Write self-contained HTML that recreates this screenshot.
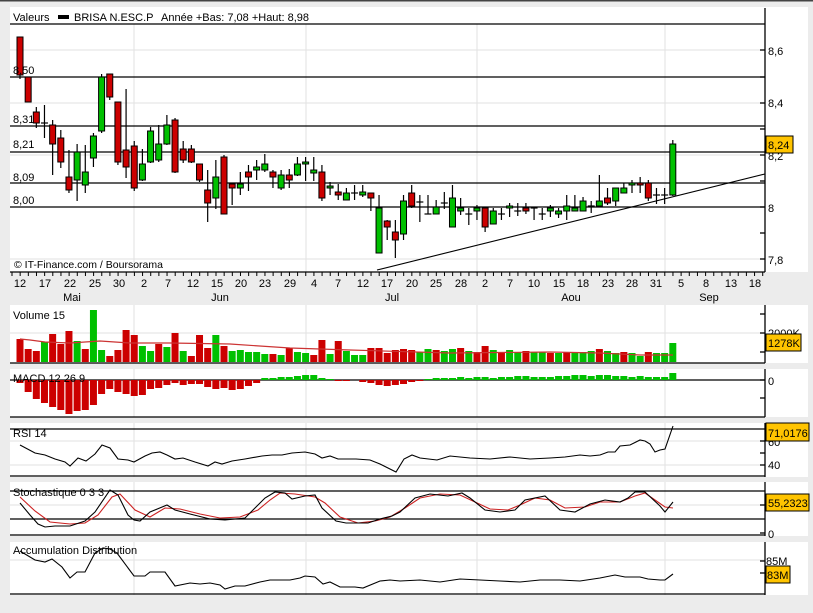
<!DOCTYPE html>
<html><head><meta charset="utf-8"><style>
html,body{margin:0;padding:0;background:#ececec;width:813px;height:613px;overflow:hidden}
svg{display:block;font-family:"Liberation Sans",sans-serif;font-size:11px}
</style></head><body>
<svg id="s" width="813" height="613" xmlns="http://www.w3.org/2000/svg">
<rect x="0" y="0" width="813" height="613" fill="#ececec"/>
<rect x="0" y="0" width="813" height="1.5" fill="#444"/>
<rect x="10" y="7" width="798" height="265" fill="#fff"/>
<rect x="10" y="305" width="798" height="58" fill="#fff"/>
<rect x="10" y="369" width="798" height="48" fill="#fff"/>
<rect x="10" y="423" width="798" height="54" fill="#fff"/>
<rect x="10" y="482" width="798" height="54" fill="#fff"/>
<rect x="10" y="542" width="798" height="53" fill="#fff"/>
<g id="grid" stroke="#e2e2e2" stroke-width="1"></g>
<g id="lines" stroke="#000" stroke-width="1.3"></g>
<g id="draw"></g>
<g fill="#000">
<text x="13" y="21">Valeurs</text>
<rect x="58" y="15" width="11" height="4"/>
<text x="74" y="21">BRISA N.ESC.P</text>
<text x="161" y="21">Année +Bas: 7,08 +Haut: 8,98</text>
<text x="13" y="74">8,50</text><text x="13" y="123">8,31</text><text x="13" y="148">8,21</text><text x="13" y="181">8,09</text><text x="13" y="204">8,00</text>
<text x="14" y="268" font-size="10.5">© IT-Finance.com / Boursorama</text>
<text x="768" y="55">8,6</text><text x="768" y="107">8,4</text><text x="768" y="160">8,2</text><text x="768" y="212">8</text><text x="768" y="264">7,8</text>
<text x="13" y="319">Volume 15</text>
<text x="768" y="337">2000K</text>
<text x="13" y="382">MACD 12 26 9</text>
<text x="768" y="385">0</text>
<text x="13" y="437">RSI 14</text>
<text x="768" y="446">60</text><text x="768" y="469">40</text>
<text x="13" y="496">Stochastique 0 3 3</text>
<text x="768" y="538">0</text>
<text x="13" y="554">Accumulation Distribution</text>
<text x="766" y="565">85M</text>
</g>
<g fill="#000" text-anchor="middle" id="dates"></g>
<g>
<rect x="766" y="136" width="27" height="17" fill="#ffc400" stroke="#000"/><text x="768" y="149">8,24</text>
<rect x="766" y="334" width="35" height="17" fill="#ffc400" stroke="#000"/><text x="768" y="347">1278K</text>
<rect x="766" y="423" width="43" height="18" fill="#ffc400" stroke="#000"/><text x="768" y="437">71,0176</text>
<rect x="766" y="494" width="43" height="17" fill="#ffc400" stroke="#000"/><text x="768" y="507">55,2323</text>
<rect x="766" y="566" width="24" height="17" fill="#ffc400" stroke="#000"/><text x="767" y="579">83M</text>
</g>
</svg>
<script>
var NS="http://www.w3.org/2000/svg";
function el(p,t,a){var e=document.createElementNS(NS,t);for(var k in a)e.setAttribute(k,a[k]);document.getElementById(p).appendChild(e);return e;}
// grid
[134,306,477,665].forEach(function(x){[[24,272],[305,363],[369,417],[423,477],[482,536],[542,595]].forEach(function(r){el("grid","line",{x1:x,y1:r[0],x2:x,y2:r[1]});});});
[50,103,155,259,333,441,465,505,560].forEach(function(y){el("grid","line",{x1:10,y1:y,x2:765,y2:y});});
// black lines
[24,77,126,152,183,207,363,380,417,429,476,491,519,535,594].forEach(function(y){el("lines","line",{x1:10,y1:y,x2:765,y2:y});});
[[8,272],[305,363],[369,417],[423,477],[482,536],[542,595]].forEach(function(r){el("lines","line",{x1:765,y1:r[0],x2:765,y2:r[1]});});
[50,77,103,129,155,181,207,233,259,314,333,352,380,398,441,453,465,505,533,561,573].forEach(function(y){el("lines","line",{x1:760,y1:y,x2:765,y2:y});});
el("lines","line",{x1:10,y1:272,x2:765,y2:272});
for(var tx=12;tx<765;tx+=8.16){el("lines","line",{x1:tx,y1:272,x2:tx,y2:276,"stroke-width":1});}
// dates
var ds=[["12",20],["17",45],["22",70],["25",95],["30",119],["2",144],["7",168],["12",193],["15",217],["20",241],["23",265],["29",290],["4",314],["7",338],["12",363],["17",387],["20",412],["25",436],["28",461],["2",485],["7",510],["10",534],["15",559],["18",583],["23",608],["28",632],["31",656],["5",681],["8",706],["13",731],["18",755]];
ds.forEach(function(d){el("dates","text",{x:d[1],y:287}).textContent=d[0];});
[["Mai",72],["Jun",220],["Jul",392],["Aou",571],["Sep",709]].forEach(function(d){el("dates","text",{x:d[1],y:301}).textContent=d[0];});
// candles [c,bt,bb,wt,wb]
var C=[["r",37,75,37,79],["r",77,102,77,102],["r",112,123,107,128],["d",123,123,105,138],["r",125,144,120,175],["r",138,162,130,168],["r",177,190,150,193],["g",152,180,144,201],["g",172,185,145,193],["g",136,158,133,167],["g",77,131,74,133],["r",74,97,74,100],["r",102,162,102,165],["r",150,167,89,178],["r",146,188,141,191],["g",164,180,149,181],["g",131,162,127,163],["g",144,160,125,162],["g",125,144,115,145],["r",120,172,118,173],["r",149,160,141,163],["r",149,162,145,163],["r",164,180,164,182],["r",190,203,170,222],["g",177,198,160,209],["r",157,214,155,214],["r",184,188,184,205],["g",184,188,172,195],["r",172,177,165,191],["g",167,170,160,180],["g",164,170,154,172],["r",172,177,170,188],["g",175,188,170,190],["r",175,180,169,188],["g",164,175,157,176],["g",162,164,157,181],["g",170,173,157,181],["r",172,198,165,201],["g",186,188,182,195],["r",192,195,184,200],["g",193,200,188,200],["d",193,193,185,200],["g",192,195,185,197],["r",193,198,193,211],["g",208,253,195,253],["r",221,227,220,240],["r",232,240,220,258],["g",201,234,195,240],["r",193,206,185,208],["d",202,202,195,222],["d",214,214,195,214],["g",207,214,200,214],["d",203,203,192,209],["g",198,227,185,227],["g",208,211,198,215],["d",214,214,208,225],["g",208,211,205,220],["r",208,227,208,232],["g",211,224,208,224],["d",214,214,208,220],["g",206,208,203,217],["d",211,211,203,216],["r",208,211,203,214],["d",208,208,208,220],["d",214,214,208,220],["g",208,211,205,217],["g",211,214,208,218],["g",206,211,195,220],["g",208,211,195,211],["g",201,211,197,211],["d",206,206,201,213],["g",201,206,175,206],["r",198,203,188,205],["g",188,201,188,206],["g",188,193,183,193],["g",183,185,180,193],["r",183,185,177,193],["r",183,198,180,201],["d",195,195,188,204],["d",195,195,188,204],["g",144,195,140,196]];
function X(i){return 20+i*8.16;}
C.forEach(function(c,i){var x=X(i);
el("draw","line",{x1:x,y1:c[3],x2:x,y2:c[4],stroke:"#000","stroke-width":1.2});
if(c[0]=="d"){el("draw","line",{x1:x-3.5,y1:c[1],x2:x+3.5,y2:c[1],stroke:"#000","stroke-width":1.2});}
else el("draw","rect",{x:x-3,y:c[1],width:6,height:Math.max(c[2]-c[1],2),fill:c[0]=="r"?"#cc0000":"#00c000",stroke:"#000","stroke-width":1});});
el("draw","line",{x1:377,y1:270,x2:765,y2:174,stroke:"#000","stroke-width":1.1});
// volume
var V=[[339,"r"],[349,"r"],[351,"r"],[342,"g"],[334,"r"],[344,"r"],[331,"r"],[341,"g"],[349,"r"],[310,"g"],[350,"g"],[356,"r"],[350,"r"],[330,"r"],[335,"r"],[346,"g"],[351,"g"],[344,"r"],[347,"g"],[333,"r"],[351,"g"],[356,"r"],[335,"r"],[348,"r"],[335,"g"],[346,"r"],[351,"g"],[350,"g"],[352,"g"],[352,"g"],[354,"g"],[354,"r"],[355,"g"],[348,"r"],[352,"g"],[353,"g"],[355,"r"],[340,"r"],[354,"g"],[341,"r"],[351,"g"],[355,"g"],[355,"g"],[348,"r"],[348,"r"],[353,"r"],[350,"r"],[349,"r"],[350,"r"],[352,"g"],[349,"g"],[350,"r"],[351,"g"],[349,"g"],[348,"r"],[351,"g"],[352,"r"],[346,"r"],[350,"g"],[352,"r"],[350,"g"],[352,"g"],[351,"r"],[352,"g"],[352,"g"],[353,"r"],[353,"g"],[352,"r"],[353,"g"],[352,"g"],[351,"g"],[349,"r"],[351,"g"],[353,"g"],[352,"r"],[353,"g"],[356,"g"],[352,"r"],[353,"g"],[353,"g"],[343,"g"]];
V.forEach(function(v,i){var x=X(i);el("draw","rect",{x:x-3.5,y:v[0],width:7,height:362-v[0],fill:v[1]=="r"?"#cc0000":"#00c000"});});
el("draw","polyline",{points:"20,339 30,340 45,342 70,343 100,341 130,343 170,343 230,344 290,348 350,350 450,353 550,352 600,353 640,355 673,355",fill:"none",stroke:"#cc3333","stroke-width":1.2});
// macd
var M=[383,392,399,403,407,410,414,411,410,405,394,389,392,394,396,395,389,388,385,383,385,384,384,387,389,388,390,389,386,383,378,378,377,377,376,375,375,378,379,381,381,380,382,383,385,386,385,384,382,381,379,378,378,378,377,378,377,377,378,377,377,376,376,377,377,377,376,376,375,375,376,375,375,376,376,377,376,377,377,377,373];
M.forEach(function(m,i){var x=X(i);var t=Math.min(m,380),h=Math.abs(m-380);el("draw","rect",{x:x-3.5,y:t,width:7,height:h,fill:m>380?"#cc0000":"#00c000"});});
function pl(p,c){el("draw","polyline",{points:p,fill:"none",stroke:c,"stroke-width":1.1});}
pl("20,445 35,453 45,455 55,459 65,462 70,466 78,458 86,461 95,454 102,445 110,448 118,459 128,460 134,462 145,456 152,453 160,452 167,455 175,459 183,458 195,462 208,466 215,462 222,464 232,461 245,459 262,456 272,455 282,455 292,453 305,452 315,454 322,458 330,456 338,459 356,459 370,460 380,464 396,472 404,459 412,455 420,458 437,460 450,456 470,458 490,459 510,457 530,459 550,458 565,457 580,455 590,456 600,455 608,452 615,452 620,446 630,445 640,440 645,441 650,444 655,452 660,450 665,449 673,426","#000");
pl("20,497 35,511 50,522 70,524 85,523 98,515 112,497 120,494 135,510 150,517 165,508 180,509 200,514 220,518 240,517 258,510 270,500 280,493 295,494 315,497 325,503 340,517 358,523 375,521 390,517 405,508 420,498 440,494 460,495 475,502 490,509 508,510 520,505 535,498 550,500 565,508 585,507 600,502 620,502 635,496 645,493 655,500 665,507 673,508","#cc2222");
pl("20,503 30,515 38,524 45,527 55,526 70,526 85,521 95,512 110,490 118,495 128,515 134,520 140,521 150,512 167,505 175,510 190,514 210,519 225,520 245,518 255,508 265,498 275,492 285,493 292,499 305,496 315,495 322,508 336,521 346,523 354,523 368,523 380,519 392,516 400,512 415,498 430,494 448,496 462,493 470,498 485,510 500,512 515,510 525,500 545,496 560,510 575,512 590,504 605,500 620,502 628,498 635,492 645,492 660,506 665,512 673,502","#000");
pl("20,551 35,560 45,562 52,559 62,567 70,578 77,572 85,572 95,553 103,548 110,549 117,553 134,576 145,576 150,572 165,572 175,586 190,583 200,584 210,583 220,585 225,589 235,586 245,586 260,582 270,580 290,580 300,578 305,576 315,577 323,584 330,582 340,587 355,587 363,588 380,581 390,580 400,581 420,580 440,582 460,579 480,580 500,581 520,582 540,580 560,580 580,581 600,578 615,575 625,577 640,577 648,579 660,580 665,580 673,574","#000");
</script>
</body></html>
